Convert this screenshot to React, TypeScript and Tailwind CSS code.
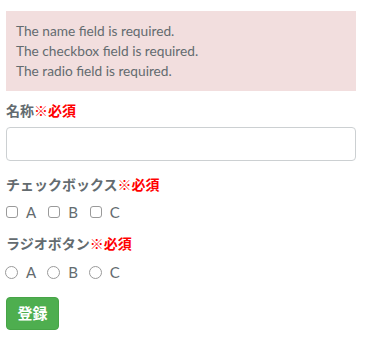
import React from 'react';

const opts = ['A', 'B', 'C'];

function Label({ text }: { text: string }) {
  return (
    <div className="text-[14px] leading-[20px] font-bold text-[#636b6f]">
      {text}
      <span className="text-[#ff0000]">※必須</span>
    </div>
  );
}

export default function App() {
  return (
    <div
      className="bg-white min-h-[341px] px-[6px] pt-[11px] w-[370px]"
      style={{ fontFamily: 'Lato, "Noto Sans CJK JP", sans-serif' }}
    >
      <div className="w-[350px] bg-[#f2dede] px-[10px] py-[10px] text-[13.7px] leading-[20px] text-[#636b6f]">
        <div>The name field is required.</div>
        <div>The checkbox field is required.</div>
        <div>The radio field is required.</div>
      </div>

      <div className="mt-[10px]">
        <Label text="名称" />
        <input
          type="text"
          className="mt-[6px] block w-[350px] h-[34px] border border-[#ccd0d2] rounded-[4px] bg-white px-3 outline-none"
        />
      </div>

      <div className="mt-[14px]">
        <Label text="チェックボックス" />
        <div className="mt-[7px] flex items-center h-[20px]">
          {opts.map((o) => (
            <label key={o} className="flex items-center mr-[12px] text-[15px] text-[#636b6f]">
              <span className="w-[12px] h-[12px] border border-[#9a9a9a] rounded-[3px] bg-white" />
              <span className="ml-[8px]">{o}</span>
            </label>
          ))}
        </div>
      </div>

      <div className="mt-[12px]">
        <Label text="ラジオボタン" />
        <div className="mt-[8px] flex items-center h-[20px]">
          {opts.map((o) => (
            <label key={o} className="flex items-center mr-[12px] text-[15px] text-[#636b6f]">
              <span className="w-[13px] h-[13px] border border-[#9a9a9a] rounded-full bg-white -ml-px" />
              <span className="ml-[8px]">{o}</span>
            </label>
          ))}
        </div>
      </div>

      <button
        type="button"
        className="mt-[15px] w-[53px] h-[33px] rounded-[4px] bg-[#4eae4f] border border-[#47a447] text-white text-[15px] font-bold"
      >
        登録
      </button>
    </div>
  );
}
